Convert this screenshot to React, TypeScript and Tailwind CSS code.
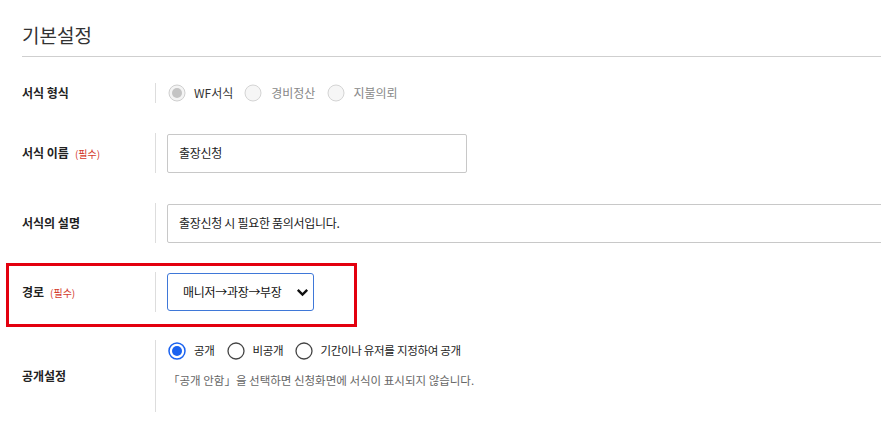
import React from "react";

const font = { fontFamily: '"Noto Sans CJK KR", "Noto Sans", sans-serif' };

function Radio({ state }: { state: "disabledOn" | "disabledOff" | "on" | "off" }) {
  if (state === "disabledOn")
    return (
      <svg width="18" height="18" viewBox="0 0 18 18" className="shrink-0">
        <circle cx="9" cy="9" r="8" fill="#f4f4f4" stroke="#cfcfcf" strokeWidth="1" />
        <circle cx="9" cy="9" r="5" fill="#c4c4c4" />
      </svg>
    );
  if (state === "disabledOff")
    return (
      <svg width="18" height="18" viewBox="0 0 18 18" className="shrink-0">
        <circle cx="9" cy="9" r="8" fill="#f6f6f6" stroke="#d4d4d4" strokeWidth="1" />
      </svg>
    );
  if (state === "on")
    return (
      <svg width="18" height="18" viewBox="0 0 18 18" className="shrink-0">
        <circle cx="9" cy="9" r="8" fill="#fff" stroke="#1a62f0" strokeWidth="1.5" />
        <circle cx="9" cy="9" r="5" fill="#1a62f0" />
      </svg>
    );
  return (
    <svg width="18" height="18" viewBox="0 0 18 18" className="shrink-0">
      <circle cx="9" cy="9" r="8" fill="#fff" stroke="#444" strokeWidth="1.3" />
    </svg>
  );
}

function Required() {
  return <span className="ml-[6px] text-[10px] font-normal text-[#d33a2c]">(필수)</span>;
}

function Label({ children }: { children: React.ReactNode }) {
  return (
    <div className="w-[133px] shrink-0 flex items-center text-[12px] font-bold text-[#222]">
      {children}
    </div>
  );
}

export default function App() {
  return (
    <div className="w-[881px] h-[438px] overflow-hidden bg-white text-[#222]" style={font}>
      <div className="pl-[22px] pt-[22px]">
        <h2 className="text-[19px] leading-[26px] text-[#333]">기본설정</h2>
        <div className="mt-[8px] h-px bg-[#cfcfcf]" />

        {/* 서식 형식 */}
        <div className="mt-[26px] flex h-[20px]">
          <Label>서식 형식</Label>
          <div className="border-l border-[#ddd] pl-[12px] flex items-center text-[12px]">
            <Radio state="disabledOn" />
            <span className="ml-[8px] text-[#333]">WF서식</span>
            <span className="ml-[11px]"><Radio state="disabledOff" /></span>
            <span className="ml-[9px] text-[#888]">경비정산</span>
            <span className="ml-[12px]"><Radio state="disabledOff" /></span>
            <span className="ml-[8px] text-[#888]">지불의뢰</span>
          </div>
        </div>

        {/* 서식 이름 */}
        <div className="mt-[30px] flex h-[40px]">
          <Label>
            서식 이름<Required />
          </Label>
          <div className="border-l border-[#ddd] pl-[11px] flex items-center">
            <div className="w-[300px] h-[39px] border border-[#c8c8c8] rounded-[2px] px-[11px] flex items-center text-[12px] tracking-[-0.3px]">
              출장신청
            </div>
          </div>
        </div>

        {/* 서식의 설명 */}
        <div className="mt-[30px] flex h-[40px]">
          <Label>서식의 설명</Label>
          <div className="border-l border-[#ddd] pl-[11px] flex items-center">
            <div className="w-[760px] h-[39px] border border-[#c8c8c8] rounded-[2px] px-[11px] flex items-center text-[12px] tracking-[-0.3px]">
              출장신청 시 필요한 품의서입니다.
            </div>
          </div>
        </div>

        {/* 경로 */}
        <div className="mt-[20px] -ml-[16px] w-[351px] border-[3px] border-[#e3000f] pl-[13px] pt-[6px] pb-[12px]">
          <div className="flex h-[40px]">
            <Label>
              경로<Required />
            </Label>
            <div className="border-l border-[#ddd] pl-[11px] flex items-center">
              <div className="w-[147px] h-[38px] border border-[#3f78d8] rounded-[3px] pl-[15px] pr-[4px] flex items-center justify-between text-[12px] tracking-[-0.3px] text-[#111]">
                <span>매니저→과장→부장</span>
                <svg width="13" height="9" viewBox="0 0 13 9">
                  <path d="M1.8 1.8 L6.5 6.5 L11.2 1.8" fill="none" stroke="#111" strokeWidth="2.4" />
                </svg>
              </div>
            </div>
          </div>
        </div>

        {/* 공개설정 */}
        <div className="mt-[13px] flex h-[72px]">
          <Label>공개설정</Label>
          <div className="border-l border-[#ddd] pl-[12px] flex flex-col">
            <div className="flex items-center h-[22px] text-[11.5px] tracking-[-0.3px] text-[#222]">
              <Radio state="on" />
              <span className="ml-[8px]">공개</span>
              <span className="ml-[12px]"><Radio state="off" /></span>
              <span className="ml-[8px]">비공개</span>
              <span className="ml-[12px]"><Radio state="off" /></span>
              <span className="ml-[7px]">기간이나 유저를 지정하여 공개</span>
            </div>
            <div className="mt-[10px] text-[11.5px] text-[#666]">
              「공개 안함」을 선택하면 신청화면에 서식이 표시되지 않습니다.
            </div>
          </div>
        </div>
      </div>
    </div>
  );
}
